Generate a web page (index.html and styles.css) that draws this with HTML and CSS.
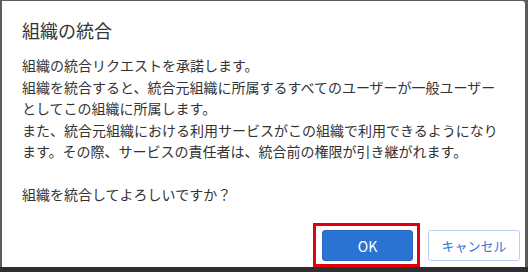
FILE: index.html
```html
<!DOCTYPE html>
<html lang="ja">
<head>
<meta charset="utf-8">
<title>組織の統合</title>
<link rel="stylesheet" href="styles.css">
</head>
<body>
<div class="overlay">
  <div class="dialog">
    <h1 class="title">組織の統合</h1>
    <div class="content">
      <p class="text">組織の統合リクエストを承諾します。<br>組織を統合すると、統合元組織に所属するすべてのユーザーが一般ユーザー<br>としてこの組織に所属します。<br>また、統合元組織における利用サービスがこの組織で利用できるようになり<br>ます。その際、サービスの責任者は、統合前の権限が引き継がれます。</p>
      <p class="text confirm">組織を統合してよろしいですか？</p>
    </div>
    <div class="footer">
      <span class="highlight"><button class="btn btn-primary" type="button">OK</button></span>
      <button class="btn btn-secondary" type="button">キャンセル</button>
    </div>
  </div>
</div>
</body>
</html>
```

FILE: styles.css
```css
html, body {
  margin: 0;
  padding: 0;
}
body {
  width: 528px;
  height: 272px;
  background: #3a3a3a;
  font-family: "Noto Sans CJK JP", "Noto Sans", sans-serif;
  color: #333;
  overflow: hidden;
}
.overlay {
  box-sizing: border-box;
  height: 272px;
  padding: 1px 3px 5px 2px;
  background: linear-gradient(to bottom, #5c5c5c 0, #5c5c5c 267px, #2e2e2e 267px);
}
.dialog {
  box-sizing: border-box;
  height: 266px;
  background: #fff;
  border-radius: 0 3px 0 0;
  display: flex;
  flex-direction: column;
  padding: 0 5px 0 20px;
}
.title {
  margin: 16px 0 0 0;
  font-size: 18px;
  font-weight: normal;
  line-height: 27px;
  color: #333;
}
.content {
  margin-top: 11px;
  width: 484px;
}
.text {
  margin: 0;
  font-size: 14px;
  line-height: 21.5px;
  color: #333;
}
.confirm {
  margin-top: 21.5px;
}
.footer {
  margin-top: auto;
  display: flex;
  justify-content: flex-end;
  align-items: center;
  gap: 8px;
}
.highlight {
  display: flex;
  border: 3px solid #e0000f;
  padding: 4px 4px 3px 6px;
}
.btn {
  box-sizing: border-box;
  height: 31px;
  border-radius: 3px;
  font-family: "Noto Sans CJK JP", "Noto Sans", sans-serif;
  font-size: 14px;
  cursor: pointer;
  padding: 0;
}
.btn-primary {
  width: 91px;
  background: #2b73d3;
  border: 1px solid #2567c2;
  color: #fff;
}
.btn-secondary {
  width: 92px;
  background: #fff;
  border: 1px solid #b8cff0;
  color: #3479d6;
  font-size: 13px;
}
```
